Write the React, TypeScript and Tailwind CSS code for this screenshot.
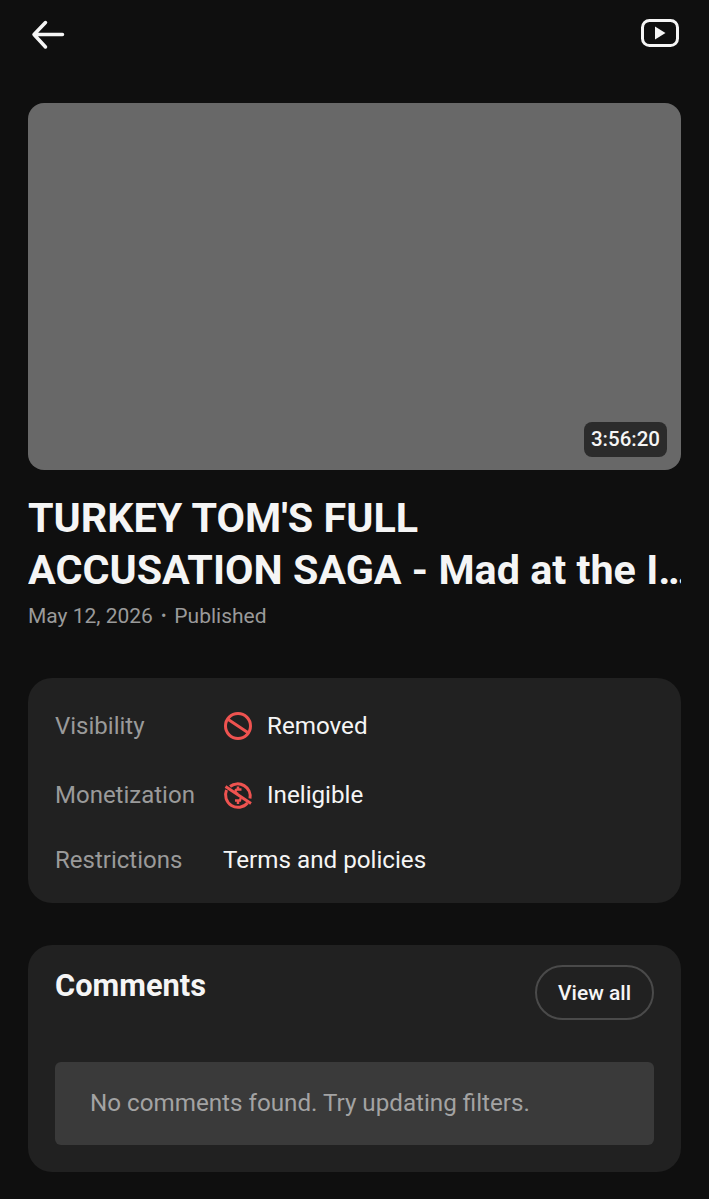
function BackIcon() {
  return (
    <svg width="36" height="32" viewBox="0 0 36 32" fill="none" stroke="#f5f5f5" strokeWidth="3.500" strokeLinecap="round" strokeLinejoin="round">
      <path d="M3 15.500H31.500M14.500 3.500L3 15.500L14.500 28" />
    </svg>
  );
}

function VideoIcon() {
  return (
    <svg width="38" height="28" viewBox="0 0 38 28" fill="none">
      <rect x="1.500" y="1.500" width="35" height="25" rx="7" stroke="#f5f5f5" strokeWidth="3" />
      <path d="M14 7.500L24.500 14L14 20.500Z" fill="#f5f5f5" />
    </svg>
  );
}

function BlockedIcon() {
  return (
    <svg width="30" height="30" viewBox="0 0 30 30" fill="none" stroke="#ef5350" strokeWidth="3">
      <circle cx="15" cy="15" r="12.500" />
      <path d="M4.500 8L25.500 22" />
    </svg>
  );
}

function NoMoneyIcon() {
  return (
    <svg width="30" height="30" viewBox="0 0 30 30" fill="none" stroke="#ef5350" strokeWidth="3">
      <path d="M7 6.500A12.500 12.500 0 0 1 27 18.500M24.500 23A12.500 12.500 0 0 1 3.500 10" />
      <path d="M2.500 6.500L28 23.500" />
      <path d="M18.500 9.500H14.500Q12.500 9.500 12.500 11.500Q12.500 13 15 14M15 6.500V10M17 18Q18 19.500 17 20.500H12M15 20V24" strokeWidth="2.500" />
    </svg>
  );
}

function InfoRow({ label, children, className }: { label: string; children: React.ReactNode; className: string }) {
  return (
    <div className={`flex items-center ${className}`}>
      <span className="w-[168px] shrink-0 text-[#9a9a9a]">{label}</span>
      <div className="flex items-center gap-[14px] text-[24.2px] text-[#f5f5f5]">{children}</div>
    </div>
  );
}

export default function App() {
  return (
    <div className="min-h-[1199px] overflow-hidden bg-[#0f0f0f] px-7 font-['Roboto',sans-serif]">
      <header className="flex h-[103px] items-start justify-between pt-[19px] pr-[2px] pl-[3px]">
        <BackIcon />
        <VideoIcon />
      </header>

      <div className="relative h-[367px] rounded-2xl bg-[#686868]">
        <span className="absolute right-[14px] bottom-[13px] rounded-lg bg-[#2b2b2b] px-[7px] py-[4px] text-[20.500px] leading-[27px] font-medium text-[#f5f5f5]">
          3:56:20
        </span>
      </div>

      <h1 className="mt-[22px] text-[41.300px] leading-[52px] font-bold text-[#f5f5f5]">
        <div>TURKEY TOM'S FULL</div>
        <div className="overflow-hidden whitespace-nowrap">ACCUSATION SAGA - Mad at the I…</div>
      </h1>
      <div className="mt-[5px] flex items-center text-[21px] leading-[30px] text-[#9a9a9a]">
        <span>May 12, 2026</span>
        <span className="mx-[8px] text-[16px]">•</span>
        <span>Published</span>
      </div>

      <section className="mt-[47px] h-[225px] rounded-3xl bg-[#212121] px-[27px] pt-[30px] text-[24px] leading-[36px]">
        <InfoRow label="Visibility" className="">
          <BlockedIcon />
          <span>Removed</span>
        </InfoRow>
        <InfoRow label="Monetization" className="mt-[33px]">
          <NoMoneyIcon />
          <span>Ineligible</span>
        </InfoRow>
        <InfoRow label="Restrictions" className="mt-[29px]">
          <span>Terms and policies</span>
        </InfoRow>
      </section>

      <section className="mt-[42px] h-[227px] rounded-3xl bg-[#212121] px-[27px] pt-[20px]">
        <div className="flex items-start justify-between">
          <h2 className="mt-[1px] text-[30.800px] leading-[40px] font-bold text-[#f5f5f5]">Comments</h2>
          <button className="h-[55px] w-[119px] rounded-full border-2 border-[#4a4a4a] pt-[2px] text-[21px] font-medium text-[#f5f5f5]">
            View all
          </button>
        </div>
        <div className="mt-[42px] flex h-[83px] items-center rounded-md bg-[#3a3a3a] px-[35px] text-[24.200px] text-[#a3a3a3]">
          No comments found. Try updating filters.
        </div>
      </section>
    </div>
  );
}
